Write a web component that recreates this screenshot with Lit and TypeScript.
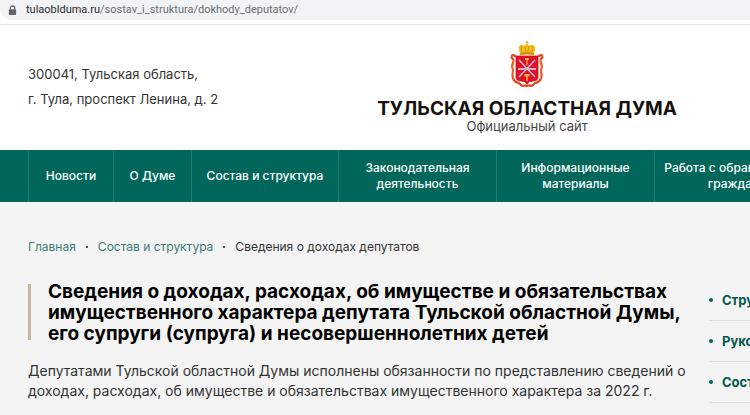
import { LitElement, html, css, svg } from "lit";
import { customElement } from "lit/decorators.js";

const NAV = [
  ["Новости"],
  ["О Думе"],
  ["Состав и структура"],
  ["Законодательная", "деятельность"],
  ["Информационные", "материалы"],
  ["Работа с обращениями", "граждан"],
];

const SIDE = ["Структура", "Руководство", "Состав"];

const lock = svg`
  <path d="M2.5 5V3.5a2.5 2.5 0 0 1 5 0V5" fill="none" stroke="#5f6368" stroke-width="1.4"/>
  <rect x="1" y="4.5" width="8" height="6.5" rx="1" fill="#5f6368"/>`;

const emblem = svg`
  <g fill="none" stroke="#e8481d" stroke-width="2.2" stroke-linecap="round">
    <path d="M5 15C1 12 1 17 3 18C5 21 1 23 2.5 27C4 30 1.500 33 3 37C4 42 8 41 10 43C12 47 15 43 17 45"/>
    <path d="M29 15C33 12 33 17 31 18C29 21 33 23 31.500 27C30 30 32.500 33 31 37C30 42 26 41 24 43C22 47 19 43 17 45"/>
  </g>
  <g fill="none" stroke="#f7a64a" stroke-width="0.600">
    <path d="M3 19C5 22 2 24 3 27C4 31 2 34 4 38"/>
    <path d="M31 19C29 22 32 24 31 27C30 31 32 34 30 38"/>
  </g>
  <path d="M6 15H28V36Q28 40 23 40Q19 40 17 43Q15 40 11 40Q6 40 6 36Z" fill="#e30d2c" stroke="#c21620" stroke-width="0.800"/>
  <path d="M15 17H19V19H17.600V24H16.400V19H15ZM14.500 33H19.500V35.500H17.800V40H16.200V35.500H14.500Z" fill="#f2b43a"/>
  <g stroke="#c9c3cc" stroke-width="1.500">
    <path d="M9 19L25 36M25 19L9 36"/>
    <path d="M8 28H26" stroke-width="1.800"/>
  </g>
  <path d="M10 14L9 8Q8 4 12 4Q14 4 15 5Q16 3 17 3Q18 3 19 5Q20 4 22 4Q26 4 25 8L24 14Q17 12 10 14Z" fill="#f3bd16"/>
  <path d="M10 12Q17 10 24 12V14Q17 13 10 14Z" fill="#d98f0c"/>
  <path d="M12 5Q10 8 12 11M22 5Q24 8 22 11M15 5L16 11M19 5L18 11" fill="none" stroke="#c98a12" stroke-width="0.700"/>
  <path d="M17 0V4M15.500 1.500H18.500" stroke="#e7a90e" stroke-width="1"/>`;

@customElement("app-root")
export class AppRoot extends LitElement {
  static styles = css`
    :host {
      display: block;
      min-height: 100vh;
      overflow: hidden;
      background: #f4f4f4;
      color: #333;
      font-family: Inter, "Noto Sans", sans-serif;
    }
    a { color: inherit; text-decoration: none; }
    .browser {
      height: 24px;
      background: #fff;
      border-bottom: 1px solid #e2e3e5;
    }
    .address {
      display: flex;
      align-items: center;
      gap: 9px;
      height: 20px;
      padding-left: 8px;
      background: #f1f3f4;
      border-bottom-left-radius: 12px;
      font: 11px/20px Roboto, "Noto Sans", sans-serif;
      color: #6b6e72;
    }
    .lock { width: 9px; height: 11px; flex: none; }
    .host { color: #26282b; }
    .head {
      display: flex;
      align-items: center;
      justify-content: space-between;
      padding: 16px 73px 17px 28px;
      background: #fff;
    }
    address {
      font-style: normal;
      font-size: 13px;
      line-height: 25px;
    }
    .brand {
      display: flex;
      flex-direction: column;
      align-items: center;
      white-space: nowrap;
    }
    .emblem { width: 34px; height: 48px; }
    .title {
      margin-top: 9px;
      font-size: 19px;
      line-height: 21px;
      font-weight: 700;
      color: #15110e;
    }
    .sub { font-size: 13px; line-height: 14px; color: #444; }
    nav ul {
      display: grid;
      grid-template-columns: 85px 78px 147px 158px 158px 158px;
      margin: 0;
      padding: 0 0 0 28px;
      list-style: none;
      background: #00675a;
    }
    nav li {
      display: flex;
      border-left: 1px solid #1d7a6d;
    }
    nav a {
      flex: 1;
      display: flex;
      flex-direction: column;
      align-items: center;
      justify-content: center;
      min-height: 52px;
      color: #fff;
      font-size: 12px;
      line-height: 16px;
      font-weight: 500;
      white-space: nowrap;
    }
    .crumbs {
      display: flex;
      margin: 0;
      padding: 36px 28px 0;
      list-style: none;
      font-size: 12px;
      line-height: 18px;
      white-space: nowrap;
    }
    .crumbs li { display: flex; align-items: center; }
    .crumbs a { color: #3b7d73; }
    .crumbs li + li::before {
      content: "";
      width: 2px;
      height: 2px;
      margin: 0 10px;
      border-radius: 50%;
      background: #222;
    }
    .body {
      display: grid;
      grid-template-columns: minmax(0, 1fr) 41px;
      gap: 24px;
      padding: 24px 0 0 28px;
    }
    main { padding-top: 1px; }
    h1 {
      display: flex;
      gap: 17px;
      margin: 0;
      font-size: 19px;
      line-height: 21px;
      font-weight: 700;
      color: #000;
      white-space: nowrap;
    }
    h1::before {
      content: "";
      width: 3px;
      margin: 3px 0 4px;
      background: #c8b898;
    }
    p {
      margin: 17px 0 0;
      font-size: 14px;
      line-height: 20px;
      white-space: nowrap;
    }
    .side { margin: 0; padding: 0; list-style: none; }
    .side li {
      display: flex;
      align-items: center;
      gap: 9px;
      height: 40px;
      border-bottom: 1px solid #dedede;
      color: #00594d;
      font-size: 13px;
      font-weight: 700;
    }
    .side li::before {
      content: "";
      flex: none;
      width: 4px;
      height: 4px;
      border-radius: 50%;
      background: #00675a;
    }
  `;

  render() {
    return html`
      <div class="browser">
        <div class="address">
          <svg class="lock" viewBox="0 0 10 12" aria-hidden="true">${lock}</svg>
          <span><span class="host">tulaoblduma.ru</span>/sostav_i_struktura/dokhody_deputatov/</span>
        </div>
      </div>
      <header class="head">
        <address>300041, Тульская область,<br />г. Тула, проспект Ленина, д. 2</address>
        <a class="brand" href="#">
          <svg class="emblem" viewBox="0 0 34 48" aria-hidden="true">${emblem}</svg>
          <span class="title">ТУЛЬСКАЯ ОБЛАСТНАЯ ДУМА</span>
          <span class="sub">Официальный сайт</span>
        </a>
      </header>
      <nav>
        <ul>
          ${NAV.map((lines) => html`<li><a href="#">${lines.map((l) => html`<span>${l}</span>`)}</a></li>`)}
        </ul>
      </nav>
      <ol class="crumbs">
        <li><a href="#">Главная</a></li>
        <li><a href="#">Состав и структура</a></li>
        <li>Сведения о доходах депутатов</li>
      </ol>
      <div class="body">
        <main>
          <h1>
            <span>Сведения о доходах, расходах, об имуществе и обязательствах<br />имущественного
              характера депутата Тульской областной Думы,<br />его супруги (супруга) и
              несовершеннолетних детей</span>
          </h1>
          <p>
            Депутатами Тульской областной Думы исполнены обязанности по представлению сведений о<br />доходах,
            расходах, об имуществе и обязательствах имущественного характера за 2022 г.
          </p>
        </main>
        <ul class="side">
          ${SIDE.map((s) => html`<li><a href="#">${s}</a></li>`)}
        </ul>
      </div>
    `;
  }
}
